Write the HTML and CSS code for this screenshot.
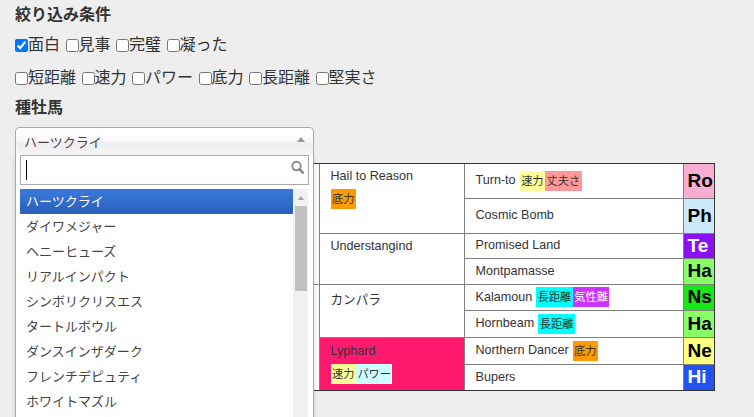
FILE: index.html
```html
<!DOCTYPE html>
<html lang="ja">
<head>
<meta charset="utf-8">
<title>種牡馬の絞り込み</title>
<link rel="stylesheet" href="styles.css">
</head>
<body>
<div class="page">
  <h3 class="title">絞り込み条件</h3>
  <div class="filters filters-quality">
    <label class="check"><input type="checkbox" checked>面白</label>
    <label class="check"><input type="checkbox">見事</label>
    <label class="check"><input type="checkbox">完璧</label>
    <label class="check"><input type="checkbox">凝った</label>
  </div>
  <div class="filters filters-aptitude">
    <label class="check"><input type="checkbox">短距離</label>
    <label class="check"><input type="checkbox">速力</label>
    <label class="check"><input type="checkbox">パワー</label>
    <label class="check"><input type="checkbox">底力</label>
    <label class="check"><input type="checkbox">長距離</label>
    <label class="check"><input type="checkbox">堅実さ</label>
  </div>
  <h3 class="title title-sire">種牡馬</h3>

  <div class="chosen">
    <div class="chosen-single"><span>ハーツクライ</span><i class="arrow-up"></i></div>
    <div class="chosen-drop">
      <div class="chosen-search">
        <div class="search-input">
          <span class="caret"></span>
          <svg class="search-icon" width="14" height="14" viewBox="0 0 14 14" aria-hidden="true">
            <circle cx="6.5" cy="6" r="4.2" fill="none" stroke="#8a8a8a" stroke-width="1.9"/>
            <line x1="9.6" y1="9.2" x2="12.8" y2="12.6" stroke="#8a8a8a" stroke-width="2.6" stroke-linecap="round"/>
          </svg>
        </div>
      </div>
      <div class="chosen-results">
        <ul class="result-list">
          <li class="highlighted">ハーツクライ</li>
          <li>ダイワメジャー</li>
          <li>ヘニーヒューズ</li>
          <li>リアルインパクト</li>
          <li>シンボリクリスエス</li>
          <li>タートルボウル</li>
          <li>ダンスインザダーク</li>
          <li>フレンチデピュティ</li>
          <li>ホワイトマズル</li>
        </ul>
        <div class="scrollbar">
          <div class="scroll-btn"><i></i></div>
          <div class="scroll-thumb"></div>
        </div>
      </div>
    </div>
  </div>

  <div class="pedigree-wrap">
    <table class="pedigree">
      <colgroup><col class="c0"><col class="c1"><col class="c2"><col class="c3"></colgroup>
      <tr class="h34">
        <td class="gen2" rowspan="4"></td>
        <td class="anc anc-top" rowspan="2"><div class="name">Hail to Reason</div><div class="tags"><span class="tag t-sokoryoku">底力</span></div></td>
        <td class="sub"><div class="line">Turn-to<span class="tags-inline"><span class="tag t-sokuryoku">速力</span><span class="tag t-joubu">丈夫さ</span></span></div></td>
        <td class="lc lc-ro">Ro</td>
      </tr>
      <tr class="h35">
        <td class="sub"><div class="line">Cosmic Bomb</div></td>
        <td class="lc lc-ph">Ph</td>
      </tr>
      <tr class="h25">
        <td class="anc" rowspan="2"><div class="name">Understangind</div><div class="tags"></div></td>
        <td class="sub"><div class="line">Promised Land</div></td>
        <td class="lc lc-te">Te</td>
      </tr>
      <tr class="h26">
        <td class="sub"><div class="line">Montpamasse</div></td>
        <td class="lc lc-ha">Ha</td>
      </tr>
      <tr class="h26">
        <td class="gen2" rowspan="4"></td>
        <td class="anc anc-low" rowspan="2"><div class="name">カンパラ</div><div class="tags"></div></td>
        <td class="sub"><div class="line">Kalamoun<span class="tags-inline"><span class="tag t-chokyori">長距離</span><span class="tag t-kisho">気性難</span></span></div></td>
        <td class="lc lc-ns">Ns</td>
      </tr>
      <tr class="h27">
        <td class="sub"><div class="line">Hornbeam<span class="tags-inline"><span class="tag t-chokyori">長距離</span></span></div></td>
        <td class="lc lc-ha">Ha</td>
      </tr>
      <tr class="h27">
        <td class="anc anc-lyphard" rowspan="2"><div class="name">Lyphard</div><div class="tags"><span class="tag t-sokuryoku">速力</span><span class="tag t-power">パワー</span></div></td>
        <td class="sub"><div class="line">Northern Dancer<span class="tags-inline"><span class="tag t-sokoryoku">底力</span></span></div></td>
        <td class="lc lc-ne">Ne</td>
      </tr>
      <tr class="h26">
        <td class="sub"><div class="line">Bupers</div></td>
        <td class="lc lc-hi">Hi</td>
      </tr>
    </table>
  </div>
</div>
</body>
</html>
```

FILE: styles.css
```css
* { box-sizing: border-box; }
html, body { margin: 0; }
html { min-height: 100%; }
body {
  min-height: 440px;
  background: #eeeeee;
  color: #333;
  font-family: "Liberation Sans", Arial, "Noto Sans CJK JP", sans-serif;
  font-size: 16px;
}
.page { padding: 3px 15px 0; }

.title {
  margin: 0;
  font-size: 16px;
  font-weight: bold;
  line-height: 24px;
}
.title-sire { margin-top: 6px; }

.filters { display: flex; align-items: center; height: 24px; }
.filters-quality { margin-top: 6px; }
.filters-aptitude { margin-top: 9px; }
.check { display: flex; align-items: center; margin-right: 5.5px; line-height: 24px; }
.check input { margin: 0; width: 13px; height: 13px; }

/* select widget */
.chosen {
  position: relative;
  z-index: 5;
  width: 299px;
  margin-top: 7px;
  font-size: 13px;
  color: #444;
}
.chosen-single {
  display: flex;
  align-items: center;
  justify-content: space-between;
  height: 28px;
  padding: 0 8px;
  border: 1px solid #aaa;
  border-bottom: 0;
  border-radius: 5px 5px 0 0;
  background: linear-gradient(#fff 20%, #f6f6f6 50%, #eee 52%, #f4f4f4 100%);
  box-shadow: inset 0 0 3px #fff;
}
.arrow-up {
  width: 0;
  height: 0;
  margin-bottom: 4px;
  border-left: 4px solid transparent;
  border-right: 4px solid transparent;
  border-bottom: 5px solid #999;
}
.chosen-drop {
  position: absolute;
  top: 100%;
  left: 0;
  width: 100%;
  background: #fff;
  border: 1px solid #aaa;
  border-top: 0;
  box-shadow: 0 4px 5px rgba(0, 0, 0, 0.15);
}
.chosen-search { padding: 0 4px 4px; }
.search-input {
  display: flex;
  justify-content: space-between;
  align-items: center;
  height: 30px;
  padding: 0 4px 0 5px;
  border: 1px solid #aaa;
  background: #fff;
}
.caret { width: 1px; height: 20px; background: #000; }
.search-icon { align-self: flex-start; margin-top: 4px; }

.chosen-results {
  display: flex;
  height: 240px;
  margin: 0 5px 4px 0;
  padding-left: 4px;
  overflow: hidden;
}
.result-list { flex: 1; margin: 0; padding: 0; list-style: none; }
.result-list li {
  padding: 5px 6px;
  line-height: 15px;
  color: #444;
  white-space: nowrap;
}
.result-list li.highlighted {
  background: linear-gradient(#3875d7 20%, #2a62bc 90%);
  color: #fff;
}
.scrollbar {
  flex: none;
  width: 15px;
  display: flex;
  flex-direction: column;
  background: #f1f1f1;
}
.scroll-btn { height: 17px; display: flex; align-items: center; justify-content: center; }
.scroll-btn i {
  width: 0;
  height: 0;
  border-left: 3.5px solid transparent;
  border-right: 3.5px solid transparent;
  border-bottom: 4px solid #a3a3a3;
}
.scroll-thumb { height: 85px; margin: 0 1px 0 2px; background: #c1c1c1; }

/* pedigree table */
.pedigree-wrap {
  width: 700px;
  margin-top: 8px;
  border: 1px solid #333;
  background: #fff;
}
.pedigree {
  width: 698px;
  table-layout: fixed;
  border-collapse: collapse;
  border-style: hidden;
  font-size: 12.6px;
  color: #333;
}
.pedigree td { border: 1px solid #808080; padding: 0 11px; vertical-align: middle; }
col.c0 { width: 303px; }
col.c1 { width: 145px; }
col.c2 { width: 219px; }
col.c3 { width: 31px; }
tr.h34 { height: 34px; }
tr.h35 { height: 35px; }
tr.h25 { height: 25px; }
tr.h26 { height: 26px; }
tr.h27 { height: 27px; }

.pedigree td.anc-top { vertical-align: top; padding-top: 4px; }
.pedigree td.anc-low { padding-top: 3px; }
.anc-lyphard { background: #ff1a6e; }
.name { line-height: 17px; }
.tags { display: flex; min-height: 20px; margin-top: 4px; }
.line { display: flex; align-items: center; line-height: 17px; }
.tags-inline { display: flex; margin-left: 4px; }
.tag {
  display: block;
  height: 20px;
  padding: 0 1.5px;
  font-size: 11.2px;
  line-height: 20px;
  color: #333;
}
.t-sokuryoku { background: #ffff99; }
.t-joubu { background: #ff9999; }
.t-sokoryoku { background: #ff9900; }
.t-chokyori { background: #00ffff; }
.t-kisho { background: #cc33ff; color: #fff; }
.t-power { background: #ccffff; }

.pedigree td.lc {
  padding: 0 0 0 4px;
  font-size: 19px;
  font-weight: bold;
  color: #000;
  overflow: hidden;
  white-space: nowrap;
}
.lc-ro { background: #f8aed0; }
.lc-ph { background: #cce9f9; }
.pedigree td.lc-te { background: #8c10f5; color: #fff; }
.lc-ha { background: #88ff66; }
.lc-ns { background: #18e818; }
.lc-ne { background: #ffff80; }
.pedigree td.lc-hi { background: #2352ee; color: #fff; }
```
